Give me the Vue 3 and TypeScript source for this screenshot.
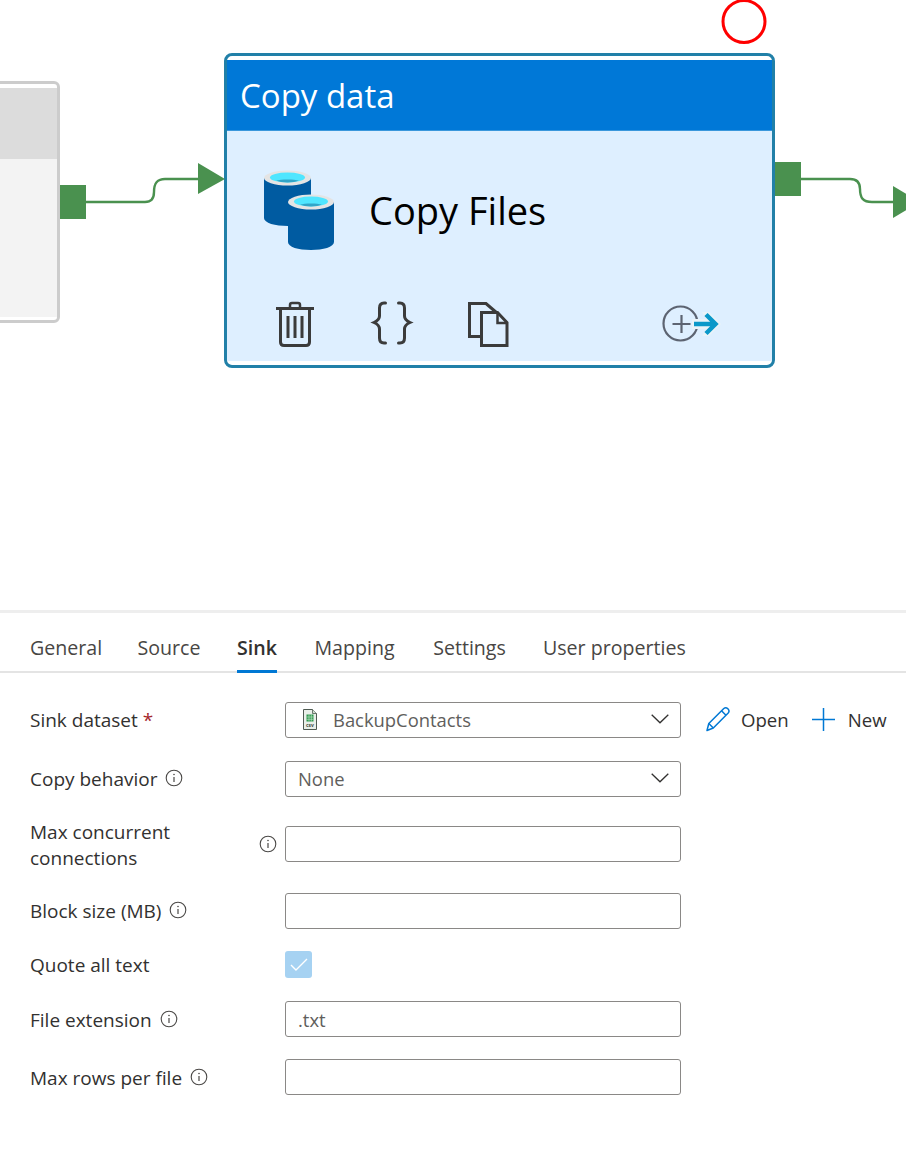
<script setup lang="ts">
interface Field {
  label: string
  kind: 'select' | 'input' | 'check'
  value?: string
  info?: boolean
  required?: boolean
  low?: boolean
  gap: number
}

const tabs = [
  { name: 'General', width: 71 },
  { name: 'Source', width: 64 },
  { name: 'Sink', width: 40 },
  { name: 'Mapping', width: 83 },
  { name: 'Settings', width: 75 },
  { name: 'User properties', width: 142 }
]

const fields: Field[] = [
  { label: 'Sink dataset', kind: 'select', value: 'BackupContacts', required: true, gap: 0 },
  { label: 'Copy behavior', kind: 'select', value: 'None', info: true, gap: 23 },
  { label: 'Max concurrent connections', kind: 'input', info: true, gap: 20 },
  { label: 'Block size (MB)', kind: 'input', info: true, gap: 22 },
  { label: 'Quote all text', kind: 'check', low: true, gap: 22 },
  { label: 'File extension', kind: 'input', value: '.txt', info: true, low: true, gap: 23 },
  { label: 'Max rows per file', kind: 'input', info: true, low: true, gap: 22 }
]
</script>

<template>
  <div class="page">
    <!-- Pipeline canvas -->
    <div class="canvas">
      <div class="node prev-node">
        <div class="node-head"></div>
        <div class="node-body"></div>
      </div>

      <div class="node copy-node">
        <div class="copy-head">Copy data</div>
        <div class="copy-name">Copy Files</div>
      </div>

      <svg class="wires" width="906" height="610" viewBox="0 0 906 610" fill="none">
        <!-- connectors -->
        <g fill="#4a914f">
          <rect x="60" y="185" width="26" height="34" />
          <path d="M198 163 L225 179 L198 194 Z" />
          <rect x="775" y="162" width="26" height="34" />
          <path d="M893 186 L920 202 L893 218 Z" />
        </g>
        <g stroke="#4a914f" stroke-width="2.4">
          <path d="M86 202 H145 C152 202 154 198 154 192 C154 183 157 179 165 179 H198" />
          <path d="M801 179 H850 C857 179 860 183 860 189 C860 198 863 202 872 202 H893" />
        </g>

        <!-- error marker -->
        <circle cx="744" cy="21.5" r="21" stroke="#ff0000" stroke-width="3" />

        <!-- database icon -->
        <path d="M264 178 V218 C264 223 275 226 288 226 C300 226 311 223 311 218 V178 Z" fill="#005ba1" />
        <ellipse cx="287.500" cy="178" rx="23.500" ry="7.500" fill="#e4e4e4" />
        <ellipse cx="287.500" cy="177.500" rx="17.500" ry="5" fill="#50e6ff" />
        <path d="M276 180.500 C281 179 294 179 299 180.500 C294 183 281 183 276 180.500 Z" fill="#32a5c8" />
        <path d="M288 202 V242 C288 247 298 250 311 250 C323 250 334 247 334 242 V202 Z" fill="#005ba1" />
        <ellipse cx="311" cy="202" rx="23" ry="7.500" fill="#e4e4e4" />
        <ellipse cx="311" cy="201.500" rx="17" ry="5" fill="#50e6ff" />
        <path d="M300 204.500 C305 203 317 203 322 204.500 C317 207 305 207 300 204.500 Z" fill="#32a5c8" />

        <!-- trash -->
        <g stroke="#3b3b3b" stroke-width="3">
          <path d="M276 308.500 H314" />
          <path d="M290 308 V305 Q290 303 292 303 H298 Q300 303 300 305 V308" stroke-width="2.500" />
          <path d="M280.500 308 V342 Q280.500 345.500 284 345.500 H306 Q309.500 345.500 309.500 342 V308" />
          <path d="M288 316 V338 M295 316 V338 M302 316 V338" />
        </g>

        <!-- braces -->
        <g stroke="#3b3b3b" stroke-width="3" stroke-linecap="round">
          <path d="M385.500 303 H384 Q379.500 303 379.500 308 V316 Q379.500 320 374 322.500 Q379.500 325 379.500 329 V338 Q379.500 343 384 343 H385.500" />
          <path d="M398.500 303 H400 Q404.500 303 404.500 308 V316 Q404.500 320 410 322.500 Q404.500 325 404.500 329 V338 Q404.500 343 400 343 H398.500" />
        </g>

        <!-- copy -->
        <g stroke="#3b3b3b" stroke-width="3">
          <path d="M481 336.500 H469.500 V303.500 H486 L497 313" />
          <path d="M481.500 312.500 H497.500 L507 322.500 V345.500 H481.500 Z" />
          <path d="M497.500 312.500 V323 H507" stroke-width="2.500" />
        </g>

        <!-- add activity -->
        <circle cx="680.500" cy="323.500" r="17" stroke="#5d6472" stroke-width="2.200" />
        <path d="M672.500 324 H690.500 M681.500 315 V333" stroke="#5d6472" stroke-width="2.200" />
        <path d="M692 319 H706 L702 312 H709 L721 324 L709 336 H702 L706 329 H692 Z" fill="#eaf3f8" />
        <path d="M694 324 H714 M706 314.500 L715.500 324 L706 333.500" stroke="#0b98c9" stroke-width="4.500" />
      </svg>
    </div>

    <!-- Properties pane -->
    <div class="pane">
      <div class="tabs">
        <span
          v-for="tab in tabs"
          :key="tab.name"
          class="tab"
          :class="{ active: tab.name === 'Sink' }"
          :style="{ width: tab.width + 'px' }"
        >{{ tab.name }}</span>
      </div>

      <div class="form">
        <div v-for="f in fields" :key="f.label" class="row" :style="{ marginTop: f.gap + 'px' }">
          <div class="label" :class="{ wide: f.label.length > 20, low: f.low }">
            <span class="label-text">{{ f.label }}<em v-if="f.required"> *</em></span>
            <svg v-if="f.info" class="info" width="18" height="18" viewBox="0 0 18 18" fill="none">
              <circle cx="9" cy="9" r="7.800" stroke="#4a4846" stroke-width="1.100" />
              <path d="M9 8 V13" stroke="#4a4846" stroke-width="1.200" />
              <circle cx="9" cy="5.500" r="0.800" fill="#4a4846" />
            </svg>
          </div>

          <div v-if="f.kind === 'select'" class="control-wrap">
            <div class="box select">
              <svg v-if="f.value === 'BackupContacts'" class="csv" width="14" height="21" viewBox="0 0 14 21" fill="none">
                <path d="M0.500 0.500 H9.500 L13.500 4.500 V20.500 H0.500 Z" fill="#e9efe9" stroke="#4f5a52" />
                <path d="M9.500 0.500 V4.500 H13.500" fill="#cfdccf" stroke="#4f5a52" stroke-width="0.800" />
                <rect x="3.500" y="5.500" width="7" height="7" fill="#2f9a4e" />
                <path d="M3.500 8 H10.500 M3.500 10.300 H10.500 M6 5.500 V12.500 M8.300 5.500 V12.500" stroke="#c9e8d0" stroke-width="0.600" />
                <text x="7" y="18" text-anchor="middle" font-size="5" font-weight="700" fill="#3f4a42">csv</text>
              </svg>
              <span class="value">{{ f.value }}</span>
              <svg class="chev" width="18" height="10" viewBox="0 0 18 10" fill="none">
                <path d="M0.700 0.700 L9 8.800 L17.300 0.700" stroke="#323130" stroke-width="1.300" />
              </svg>
            </div>
            <div v-if="f.required" class="actions">
              <span class="action">
                <svg width="26" height="26" viewBox="0 0 26 26" fill="none">
                  <path d="M2 24.500 L3.800 17.500 L18.800 2.500 Q20.800 0.800 22.900 2.800 Q25 5 23.200 7 L8.300 22 Z" stroke="#0078d4" stroke-width="1.500" stroke-linejoin="round" />
                  <path d="M3.800 17.500 L8.300 22 M16.500 4.800 L21 9.300" stroke="#0078d4" stroke-width="1.500" />
                </svg>
                Open
              </span>
              <span class="action">
                <svg class="plus" width="23" height="23" viewBox="0 0 23 23" fill="none">
                  <path d="M0 11.500 H23 M11.500 0 V23" stroke="#0078d4" stroke-width="1.500" />
                </svg>
                New
              </span>
            </div>
          </div>

          <div v-else-if="f.kind === 'input'" class="control-wrap">
            <div class="box"><span class="value">{{ f.value }}</span></div>
          </div>

          <div v-else class="check">
            <svg width="18" height="13" viewBox="0 0 18 13" fill="none">
              <path d="M1 7 L6 12 L17 1" stroke="#ffffff" stroke-width="1.400" />
            </svg>
          </div>
        </div>
      </div>
    </div>
  </div>
</template>

<style scoped>
.page {
  width: 906px;
  height: 1156px;
  overflow: hidden;
  background: #fff;
  font-family: "Open Sans", "Noto Sans", sans-serif;
  color: #323130;
}

/* Canvas */
.canvas {
  position: relative;
  height: 610px;
}

.wires {
  position: absolute;
  left: 0;
  top: 0;
}

.node {
  position: absolute;
  box-sizing: border-box;
  display: flex;
  flex-direction: column;
  background: #fff;
}

.prev-node {
  left: -20px;
  top: 81px;
  width: 80px;
  height: 242px;
  padding: 4px 0 3px;
  border: 3px solid #cccccc;
  border-radius: 6px;
}

.node-head {
  height: 71px;
  background: #dcdcdc;
}

.node-body {
  flex: 1;
  background: #f3f3f3;
}

.copy-node {
  left: 224px;
  top: 53px;
  width: 551px;
  height: 315px;
  padding: 4px 0 4px;
  border: 3px solid #2180a8;
  border-radius: 8px;
}

.copy-head {
  height: 71px;
  box-sizing: border-box;
  padding-left: 13px;
  border-bottom: 1px solid #3a97dc;
  background: #0078d7;
  color: #fff;
  font-size: 33px;
  line-height: 72px;
}

.copy-name {
  flex: 1;
  padding: 49px 0 0 142px;
  background: #deefff;
  color: #000;
  font-size: 38px;
  line-height: 60px;
}

/* Pane */
.pane {
  border-top: 3px solid #eeeeee;
}

.tabs {
  display: flex;
  gap: 36px;
  height: 60px;
  box-sizing: border-box;
  padding-left: 30px;
  border-bottom: 2px solid #e4e4e4;
}

.tab {
  height: 60px;
  box-sizing: border-box;
  padding-top: 21px;
  font-size: 19.6px;
  line-height: 28px;
  text-align: center;
  white-space: nowrap;
  color: #484644;
}

.tab.active {
  border-bottom: 3px solid #0078d4;
  font-weight: 600;
  color: #323130;
}

.form {
  padding: 29px 0 0 30px;
}

.row {
  display: flex;
  align-items: center;
}

.label {
  width: 255px;
  display: flex;
  align-items: center;
  gap: 8px;
  font-size: 19px;
  line-height: 26px;
  font-weight: 500;
}

.label.wide {
  justify-content: space-between;
  width: 247px;
  margin-right: 8px;
  padding-top: 2px;
}

.label.low {
  padding-top: 2px;
  line-height: 25px;
}

.label.wide .label-text {
  width: 200px;
}

.label em {
  font-style: normal;
  color: #a4262c;
}

.info {
  flex: none;
  margin-top: -3px;
}

.control-wrap {
  display: flex;
  align-items: center;
}

.box {
  width: 396px;
  height: 36px;
  box-sizing: border-box;
  display: flex;
  align-items: center;
  padding: 0 12px;
  border: 1px solid #8a8886;
  border-radius: 3px;
  font-size: 18.4px;
  color: #605e5c;
}

.box.select {
  padding-bottom: 2px;
}

.csv {
  margin: 0 16px 0 5px;
}

.chev {
  margin-left: auto;
  margin-right: -1px;
}

.actions {
  display: flex;
  align-items: center;
  gap: 23px;
  margin-left: 24px;
  padding-bottom: 2px;
}

.action {
  display: flex;
  align-items: center;
  gap: 10px;
  font-size: 18.6px;
  color: #323130;
}

.plus {
  margin-right: 3px;
}

.check {
  width: 27px;
  height: 27px;
  display: flex;
  align-items: center;
  justify-content: center;
  background: #a6d2f2;
  border-radius: 3px;
}
</style>
